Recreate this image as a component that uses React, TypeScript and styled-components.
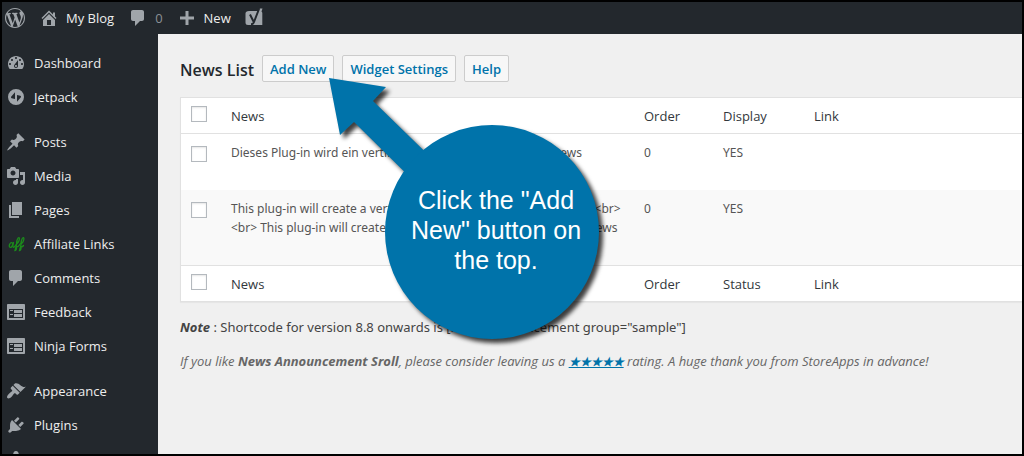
import React from "react";
import styled, { createGlobalStyle } from "styled-components";

const GlobalStyle = createGlobalStyle`
  *, *::before, *::after { box-sizing: border-box; }
  body {
    margin: 0;
    background: #000;
    color: #444;
    font-family: "Open Sans", "Noto Sans", sans-serif;
    font-size: 13px;
    line-height: 19px;
  }
  a { text-decoration: none; }
`;

const Frame = styled.div`
  position: relative;
  display: flex;
  flex-direction: column;
  height: 100vh;
  overflow: hidden;
  border: 2px solid #000;
  background: #f0f0f0;
`;

const AdminBar = styled.header`
  display: flex;
  flex: none;
  align-items: center;
  gap: 14px;
  height: 32px;
  padding: 0 3px;
  background: #23282d;
`;

const BarLink = styled.a`
  display: flex;
  align-items: center;
  gap: 7px;
  color: ${(p: { $muted?: boolean }) => (p.$muted ? "#8b9095" : "#eee")};
`;

const Icon = styled.svg`
  flex: none;
  width: 20px;
  height: 20px;
  fill: #a0a5aa;
`;

const Body = styled.div`
  display: flex;
  flex: 1;
  min-height: 0;
`;

const Sidebar = styled.nav`
  flex: none;
  width: 156px;
  padding-top: 12px;
  overflow: hidden;
  background: #23282d;
`;

const MenuGroup = styled.ul`
  margin: 0 0 11px;
  padding: 0;
  list-style: none;
`;

const MenuLink = styled.a`
  display: flex;
  align-items: center;
  gap: 8px;
  height: 34px;
  padding-left: 4px;
  color: #eee;
`;

const Main = styled.main`
  flex: 1;
  min-width: 0;
  padding: 21px 0 0 22px;
`;

const TitleRow = styled.div`
  display: flex;
  align-items: center;
  gap: 8px;
  margin-bottom: 15px;
`;

const Title = styled.h1`
  margin: 0;
  padding-top: 4px;
  color: #23282d;
  font-size: 16px;
  font-weight: 600;
  line-height: 23px;
`;

const Button = styled.button`
  height: 27px;
  padding: 2px 7px 0;
  border: 1px solid #ccc;
  border-radius: 2px;
  background: #f7f7f7;
  color: #0073aa;
  font: inherit;
  font-weight: 600;
  white-space: nowrap;
`;

const Table = styled.table`
  width: 100%;
  table-layout: fixed;
  border-collapse: separate;
  border-spacing: 0;
  border: 1px solid #e1e1e1;
  border-right: 0;
  background: #fff;
  box-shadow: 0 1px 1px rgba(0, 0, 0, 0.04);
`;

const Col = styled.col<{ $w?: number }>`
  width: ${(p) => (p.$w ? `${p.$w}px` : "auto")};
`;

const HeadCell = styled.th<{ $foot?: boolean }>`
  height: 36px;
  padding: 8px 10px 0;
  border-${(p) => (p.$foot ? "top" : "bottom")}: 1px solid #e1e1e1;
  color: #32373c;
  font-weight: 400;
  line-height: 21px;
  text-align: left;
  vertical-align: top;
`;

const Row = styled.tr<{ $tall?: boolean }>`
  height: ${(p) => (p.$tall ? 75 : 56)}px;
  background: ${(p) => (p.$tall ? "#f9f9f9" : "#fff")};
`;

const Cell = styled.td`
  padding: 9px 10px 0;
  color: #555;
  font-family: "Noto Sans", "Open Sans", sans-serif;
  font-size: 12px;
  vertical-align: top;
  white-space: nowrap;
`;

const Check = styled.input`
  display: block;
  appearance: none;
  width: 16px;
  height: 16px;
  margin: 0;
  border: 1px solid #b4b9be;
  background: #fff;
  box-shadow: inset 0 1px 2px rgba(0, 0, 0, 0.1);
`;

const CheckCell = styled(Cell)`
  padding-top: 12px;
`;

const Note = styled.p`
  margin: 16px 0 0;
  font-family: "Noto Sans", "Open Sans", sans-serif;
`;

const Rating = styled.p`
  margin: 15px 0 0;
  color: #666;
  font-style: italic;
  white-space: nowrap;
`;

const RatingLink = styled.a`
  color: #0073aa;
  font-size: 12px;
  font-weight: 600;
  text-decoration: underline;
`;

const Callout = styled.aside`
  position: absolute;
  top: 76px;
  left: 327px;
  width: 280px;
  height: 272px;
  pointer-events: none;
`;

const CalloutShape = styled.svg`
  position: absolute;
  inset: 0;
  overflow: visible;
  fill: #0073aa;
  filter: drop-shadow(4px 4px 2px rgba(0, 0, 0, 0.75));
`;

const CalloutText = styled.p`
  position: absolute;
  top: 107px;
  left: 67px;
  width: 200px;
  margin: 0;
  color: #fff;
  font-family: "Liberation Sans", Arial, sans-serif;
  font-size: 25px;
  line-height: 30px;
  text-align: center;
`;

const PATHS: Record<string, string> = {
  wordpress:
    "M20 10c0-5.51-4.49-10-10-10C4.48 0 0 4.49 0 10c0 5.52 4.48 10 10 10 5.51 0 10-4.48 10-10zM7.78 15.37L4.37 6.22c.55-.02 1.17-.08 1.17-.08.5-.06.44-1.13-.06-1.11 0 0-1.45.11-2.37.11-.18 0-.37 0-.58-.01C4.12 2.69 6.87 1.11 10 1.11c2.33 0 4.45.87 6.05 2.34-.68-.11-1.65.39-1.65 1.58 0 .74.45 1.36.9 2.1.35.61.55 1.36.55 2.46 0 1.49-1.4 5-1.4 5l-3.03-8.37c.54-.02.82-.17.82-.17.5-.05.44-1.25-.06-1.22 0 0-1.44.12-2.38.12-.87 0-2.33-.12-2.33-.12-.5-.03-.56 1.2-.06 1.22l.92.08 1.26 3.41zM17.41 10c.24-.64.74-1.87.43-4.25.7 1.29 1.05 2.71 1.05 4.25 0 3.29-1.73 6.24-4.4 7.78.97-2.59 1.94-5.2 2.92-7.78zM6.1 18.09C3.12 16.65 1.11 13.53 1.11 10c0-1.3.23-2.48.72-3.59C3.25 10.3 4.67 14.2 6.1 18.09zm4.03-6.63l2.58 6.98c-.86.29-1.76.45-2.71.45-.79 0-1.57-.11-2.29-.33.81-2.38 1.62-4.74 2.42-7.1z",
  home: "M16 8.5l1.53 1.53-1.06 1.06L10 4.6l-6.47 6.49-1.06-1.06L10 2.5l4 4v-2h2v4zm-6-2.46l6 5.99V18H4v-5.97zM12 17v-5H8v5h4z",
  comments:
    "M5 2h9c1.1 0 2 .9 2 2v7c0 1.1-.9 2-2 2h-2l-5 5v-5H5c-1.1 0-2-.9-2-2V4c0-1.1.9-2 2-2z",
  plus: "M17 8.5v3h-5.500v5.500h-3v-5.500H3v-3h5.500V3h3v5.500z",
  dashboard:
    "M3.76 16h12.48c1.1-1.37 1.76-3.11 1.76-5 0-4.42-3.58-8-8-8s-8 3.58-8 8c0 1.89.66 3.63 1.76 5zM10 4c.55 0 1 .45 1 1s-.45 1-1 1-1-.45-1-1 .45-1 1-1zM6 6c.55 0 1 .45 1 1s-.45 1-1 1-1-.45-1-1 .45-1 1-1zm8 0c.55 0 1 .45 1 1s-.45 1-1 1-1-.45-1-1 .45-1 1-1zm-5.37 5.55L12 7v6c0 1.1-.9 2-2 2s-2-.9-2-2c0-.57.24-1.08.63-1.45zM4 10c.55 0 1 .45 1 1s-.45 1-1 1-1-.45-1-1 .45-1 1-1zm12 0c.55 0 1 .45 1 1s-.45 1-1 1-1-.45-1-1 .45-1 1-1zm-5 3c0-.55-.45-1-1-1s-1 .45-1 1 .45 1 1 1 1-.45 1-1z",
  jetpack:
    "M10 2a8 8 0 1 0 0 16a8 8 0 1 0 0-16zM9 5.300v6.700l-3.300-.8c-.6-.2-.9-.8-.6-1.400zM11 14.700V8l3.300.8c.6.2.9.8.6 1.400z",
  post: "M10.44 3.02l1.82-1.82 6.36 6.35-1.83 1.82c-1.05-.68-2.48-.57-3.41.36l-.75.75c-.92.93-1.04 2.35-.35 3.41l-1.83 1.82-2.41-2.41-2.8 2.79c-.42.42-3.38 2.71-3.8 2.29s1.86-3.39 2.28-3.81l2.79-2.79L4.1 9.36l1.83-1.82c1.05.69 2.48.57 3.4-.36l.75-.75c.93-.92 1.05-2.35.36-3.41z",
  media:
    "M13 11V4c0-.55-.45-1-1-1h-1.67L9 1H5L3.67 3H2c-.55 0-1 .45-1 1v7c0 .55.45 1 1 1h10c.55 0 1-.45 1-1zM7 4.5c1.38 0 2.5 1.12 2.5 2.5S8.380 9.500 7 9.500 4.500 8.380 4.500 7 5.620 4.500 7 4.500zM14 6h5v10.500c0 1.380-1.120 2.500-2.500 2.500S14 17.880 14 16.500s1.120-2.500 2.500-2.500c.17 0 .34.02.5.05V9h-3V6zm-4 8.050V13h2v3.500c0 1.380-1.120 2.500-2.500 2.500S7 17.880 7 16.500 8.120 14 9.500 14c.17 0 .34.02.5.05z",
  page: "M6 15V2h10v13H6zm-1 1h8v2H3V5h2v11z",
  form: "M2 2h16c.55 0 1 .45 1 1v14c0 .55-.45 1-1 1H2c-.55 0-1-.45-1-1V3c0-.55.45-1 1-1zm15 14V7H3v9h14zM4 8v1h3V8H4zm4 0v3h8V8H8zm-4 4v1h3v-1H4zm4 0v3h8v-3H8z",
  appearance:
    "M14.48 11.06L7.41 3.99l1.5-1.5c.5-.56 2.3-.47 3.51.32 1.21.8 1.43 1.28 2.91 2.1 1.18.64 2.45 1.26 4.45.85zm-.71.71L6.7 4.7 4.93 6.47c-.39.39-.39 1.02 0 1.41l1.06 1.06c.39.39.39 1.03 0 1.42-.6.6-1.43 1.11-2.21 1.69-.35.26-.7.53-1.01.84C1.43 14.23.4 16.08 1.4 17.07c.99 1 2.84-.03 4.18-1.36.31-.31.58-.66.85-1.02.57-.78 1.08-1.61 1.69-2.21.39-.39 1.02-.39 1.41 0l1.06 1.06c.39.39 1.02.39 1.41 0z",
  plugins:
    "M13.11 4.36L9.87 7.6 8 5.73l3.24-3.24c.35-.34 1.05-.2 1.56.32.52.51.66 1.21.31 1.55zm-8 1.77l.91-1.12 9.01 9.01-1.19.84c-.71.71-2.63 1.16-3.82 1.16H6.14L4.9 17.26c-.59.59-1.54.59-2.12 0-.59-.58-.59-1.53 0-2.12l1.24-1.24v-3.88c0-1.13.4-3.19 1.09-3.89zm7.26 3.97l3.24-3.24c.34-.35 1.04-.21 1.55.31.52.51.66 1.21.31 1.55l-3.24 3.25z",
  users:
    "M10 9.25c-2.27 0-2.73-3.44-2.73-3.44C7 4.02 7.82 2 9.97 2c2.16 0 2.98 2.02 2.71 3.81 0 0-.41 3.44-2.68 3.44zm0 2.57L12.72 10c2.39 0 4.52 2.33 4.52 4.53v2.49s-3.65 1.13-7.24 1.13c-3.65 0-7.24-1.13-7.24-1.13v-2.49c0-2.25 1.94-4.48 4.47-4.48z",
};

const Glyph = ({ name }: { name: string }) => (
  <Icon viewBox="0 0 20 20" aria-hidden="true">
    {name === "affiliate" ? (
      <g fill="none" stroke="#1c8a1c" strokeWidth="1.300" strokeLinecap="round">
        <ellipse cx="5" cy="11" rx="1.500" ry="2.500" transform="rotate(25 5 11)" />
        <path d="M7.500 8.500Q6 13 7.500 13.300Q9 13 11 9" />
        <ellipse cx="12" cy="6.500" rx="1" ry="3" transform="rotate(18 12 6.500)" />
        <path d="M11.200 8L9 16.500q1.800 0 1.500-4q1.500 1 4-3" />
        <ellipse cx="16.500" cy="6.500" rx="1" ry="3" transform="rotate(18 16.500 6.500)" />
        <path d="M15.700 8L13.500 16.500q1.800 0 1.500-4q1.200.8 2.500-1" />
      </g>
    ) : (
      <path fillRule="evenodd" d={PATHS[name]} />
    )}
  </Icon>
);

const YoastLogo = () => (
  <Icon viewBox="0 0 20 20" role="img" aria-label="Yoast SEO">
    <path d="M4 3h9.500L15 .5h2.500L16.500 3.500q.8.600.8 1.500v12H3q-2.500 0-2.500-2.500v-9Q.5 3 4 3z" />
    <path
      d="M5 6.500l3.500 7M14 1L9 14q-.8 2.200-3 2.200"
      fill="none"
      stroke="#23282d"
      strokeWidth="2"
    />
  </Icon>
);

const MENU: [string, string][][] = [
  [
    ["dashboard", "Dashboard"],
    ["jetpack", "Jetpack"],
  ],
  [
    ["post", "Posts"],
    ["media", "Media"],
    ["page", "Pages"],
    ["affiliate", "Affiliate Links"],
    ["comments", "Comments"],
    ["form", "Feedback"],
    ["form", "Ninja Forms"],
  ],
  [
    ["appearance", "Appearance"],
    ["plugins", "Plugins"],
    ["users", ""],
  ],
];

const HeadRow = ({ labels, foot }: { labels: string[]; foot?: boolean }) => (
  <tr>
    <HeadCell $foot={foot}>
      <Check type="checkbox" aria-label="Select all news" />
    </HeadCell>
    {labels.map((label) => (
      <HeadCell key={label} $foot={foot} scope="col">
        {label}
      </HeadCell>
    ))}
  </tr>
);

const NEWS = [
  {
    lines: ["Dieses Plug-in wird ein vertikal scrollendes Ankündigung news"],
    tall: false,
  },
  {
    lines: [
      "This plug-in will create a vertical scrolling announcements news. <br>",
      "<br> This plug-in will create a vertical scrolling announcements news",
    ],
    tall: true,
  },
];

export default function App() {
  return (
    <Frame>
      <GlobalStyle />
      <AdminBar>
        <BarLink href="#" aria-label="About WordPress">
          <Glyph name="wordpress" />
        </BarLink>
        <BarLink href="#">
          <Glyph name="home" />
          My Blog
        </BarLink>
        <BarLink href="#" $muted>
          <Glyph name="comments" />0
        </BarLink>
        <BarLink href="#">
          <Glyph name="plus" />
          New
        </BarLink>
        <BarLink href="#">
          <YoastLogo />
        </BarLink>
      </AdminBar>
      <Body>
        <Sidebar aria-label="Main menu">
          {MENU.map((group) => (
            <MenuGroup key={group[0][1]}>
              {group.map(([icon, label]) => (
                <li key={label}>
                  <MenuLink href="#" aria-label={label || "Users"}>
                    <Glyph name={icon} />
                    {label}
                  </MenuLink>
                </li>
              ))}
            </MenuGroup>
          ))}
        </Sidebar>
        <Main>
          <TitleRow>
            <Title>News List</Title>
            <Button type="button">Add New</Button>
            <Button type="button">Widget Settings</Button>
            <Button type="button">Help</Button>
          </TitleRow>
          <Table>
            <colgroup>
              <Col $w={40} />
              <Col />
              <Col $w={79} />
              <Col $w={91} />
              <Col $w={218} />
            </colgroup>
            <thead>
              <HeadRow labels={["News", "Order", "Display", "Link"]} />
            </thead>
            <tbody>
              {NEWS.map((item) => (
                <Row key={item.lines[0]} $tall={item.tall}>
                  <CheckCell>
                    <Check type="checkbox" aria-label="Select news item" />
                  </CheckCell>
                  <Cell>
                    {item.lines.map((line) => (
                      <div key={line}>{line}</div>
                    ))}
                  </Cell>
                  <Cell>0</Cell>
                  <Cell>YES</Cell>
                  <Cell />
                </Row>
              ))}
            </tbody>
            <tfoot>
              <HeadRow labels={["News", "Order", "Status", "Link"]} foot />
            </tfoot>
          </Table>
          <Note>
            <strong>
              <em>Note</em>
            </strong>{" "}
            : Shortcode for version 8.8 onwards is [news-announcement
            group="sample"]
          </Note>
          <Rating>
            If you like <strong>News Announcement Sroll</strong>, please
            consider leaving us a <RatingLink href="#">★★★★★</RatingLink>{" "}
            rating. A huge thank you from StoreApps in advance!
          </Rating>
        </Main>
      </Body>
      <Callout>
        <CalloutShape viewBox="0 0 280 272" width="280" height="272">
          <path d="M0 0L57 9L44 23L121 98L101 119L25 44L11 57Z" />
          <circle cx="163" cy="154" r="107" />
        </CalloutShape>
        <CalloutText>Click the "Add New" button on the top.</CalloutText>
      </Callout>
    </Frame>
  );
}
